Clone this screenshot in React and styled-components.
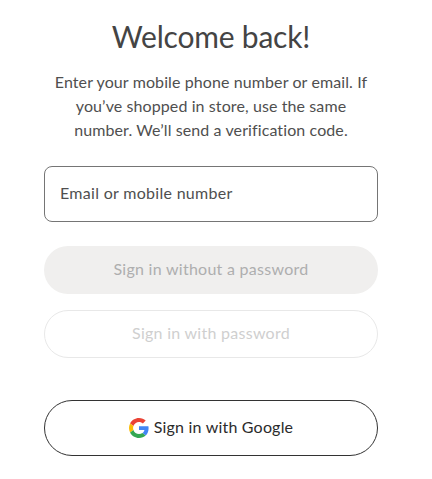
import styled, { createGlobalStyle } from "styled-components";

const GlobalStyle = createGlobalStyle`
  body {
    margin: 0;
    background: #fff;
    font-family: "Lato", "Noto Sans", sans-serif;
  }
`;

function GoogleIcon() {
  return (
    <svg width="20" height="20" viewBox="0 0 48 48" aria-hidden="true">
      <path fill="#EA4335" d="M24 9.5c3.5 0 6.700 1.200 9.200 3.600l6.900-6.900C35.900 2.400 30.500 0 24 0 14.600 0 6.500 5.400 2.600 13.200l8 6.200C12.500 13.700 17.800 9.500 24 9.500z" />
      <path fill="#4285F4" d="M47 24.500c0-1.600-.1-3.100-.4-4.500H24v9h13c-.6 3-2.300 5.500-4.800 7.200l7.700 6C44.400 38.500 47 32 47 24.500z" />
      <path fill="#FBBC05" d="M10.600 28.600c-.5-1.400-.8-3-.8-4.600s.3-3.200.8-4.600l-8-6.200C.9 16.500 0 20.100 0 24s.9 7.500 2.600 10.800l8-6.200z" />
      <path fill="#34A853" d="M24 48c6.500 0 11.900-2.100 15.900-5.800l-7.700-6c-2.100 1.400-4.900 2.300-8.200 2.300-6.200 0-11.500-4.200-13.400-9.900l-8 6.200C6.500 42.600 14.600 48 24 48z" />
    </svg>
  );
}

export default function App() {
  return (
    <>
      <GlobalStyle />
      <Wrapper>
        <Title>Welcome back!</Title>
        <Intro>
          Enter your mobile phone number or email. If you’ve shopped in store,
          use the same number. We’ll send a verification code.
        </Intro>
        <Field placeholder="Email or mobile number" />
        <FilledButton disabled>Sign in without a password</FilledButton>
        <GhostButton disabled>Sign in with password</GhostButton>
        <GoogleButton>
          <GoogleIcon />
          Sign in with Google
        </GoogleButton>
      </Wrapper>
    </>
  );
}

const Wrapper = styled.main`
  width: 334px;
  margin-left: 44px;
  padding-top: 16px;
  display: flex;
  flex-direction: column;
  color: #454545;
`;

const Title = styled.h1`
  margin: 0;
  font-size: 30px;
  line-height: 40px;
  font-weight: 400;
  letter-spacing: -0.2px;
  text-align: center;
  color: #444;
`;

const Intro = styled.p`
  margin: 14px 0 0;
  padding: 0 8px;
  font-size: 16px;
  line-height: 24px;
  letter-spacing: 0.1px;
  text-align: center;
  color: #4f4f4f;
`;

const Field = styled.input`
  box-sizing: border-box;
  width: 100%;
  height: 56px;
  margin-top: 24px;
  padding: 0 15px 3px;
  border: 1px solid #757575;
  border-radius: 8px;
  background: #fff;
  outline: none;
  font: inherit;
  font-size: 16px;
  letter-spacing: 0.3px;
  &::placeholder {
    color: #4f4f4f;
    opacity: 1;
  }
`;

const BaseButton = styled.button`
  box-sizing: border-box;
  width: 100%;
  padding: 0 0 3px;
  border-radius: 28px;
  font: inherit;
  font-size: 16px;
  letter-spacing: 0.27px;
  display: flex;
  align-items: center;
  justify-content: center;
`;

const FilledButton = styled(BaseButton)`
  height: 48px;
  margin-top: 24px;
  border: none;
  background: #f0efee;
  color: #aeaeae;
`;

const GhostButton = styled(BaseButton)`
  height: 48px;
  margin-top: 16px;
  border: 1px solid #e8e8e8;
  background: #fff;
  color: #cfcfcf;
`;

const GoogleButton = styled(BaseButton)`
  height: 56px;
  margin-top: 42px;
  gap: 5px;
  border: 1px solid #333;
  background: #fff;
  color: #2b2b2b;
  letter-spacing: 0.2px;
  svg {
    margin-top: 3px;
  }
`;
